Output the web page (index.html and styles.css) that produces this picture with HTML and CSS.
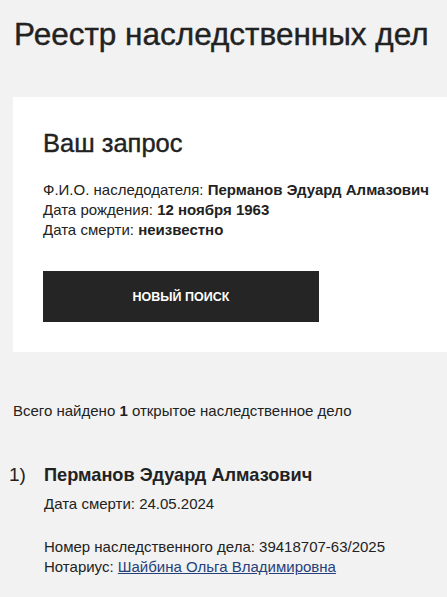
FILE: index.html
```html
<!DOCTYPE html>
<html lang="ru">
<head>
<meta charset="utf-8">
<link rel="stylesheet" href="styles.css">
</head>
<body>
<h1 class="title">Реестр наследственных дел</h1>
<section class="card">
  <h2 class="card-title">Ваш запрос</h2>
  <div class="info">
    <div>Ф.И.О. наследодателя: <b>Перманов Эдуард Алмазович</b></div>
    <div>Дата рождения: <b>12 ноября 1963</b></div>
    <div>Дата смерти: <b>неизвестно</b></div>
  </div>
  <button class="btn">НОВЫЙ ПОИСК</button>
</section>
<p class="total">Всего найдено <b>1</b> открытое наследственное дело</p>
<ol class="results">
  <li class="result">
    <span class="num">1)</span>
    <div class="body">
      <div class="name">Перманов Эдуард Алмазович</div>
      <div class="line first">Дата смерти: 24.05.2024</div>
      <div class="line gap">Номер наследственного дела: 39418707-63/2025</div>
      <div class="line">Нотариус: <a class="link" href="#">Шайбина Ольга Владимировна</a></div>
    </div>
  </li>
</ol>
</body>
</html>
```
FILE: styles.css
```css
html, body {
  margin: 0;
  padding: 0;
}
body {
  background: #f2f2f2;
  font-family: "Liberation Sans", Arial, sans-serif;
  color: #222;
  font-size: 15px;
  line-height: 20px;
}
.title {
  margin: 16px 0 0 14px;
  font-size: 31.5px;
  line-height: 36px;
  font-weight: normal;
  -webkit-text-stroke: 0.4px #222;
  white-space: nowrap;
}
.card {
  margin: 45px 0 0 13px;
  background: #fff;
  padding: 32px 8px 30px 30px;
}
.card-title {
  margin: 0;
  font-size: 25.5px;
  line-height: 28px;
  font-weight: normal;
  -webkit-text-stroke: 0.4px #222;
}
.info {
  margin-top: 23px;
  white-space: nowrap;
}
.btn {
  display: block;
  margin-top: 31px;
  width: 276px;
  height: 51px;
  border: 0;
  background: #252525;
  color: #fff;
  font-family: "Liberation Sans", Arial, sans-serif;
  font-weight: bold;
  font-size: 12.5px;
  padding: 0;
}
.total {
  margin: 49px 0 0 13px;
}
.results {
  list-style: none;
  margin: 43px 0 0 0;
  padding: 0;
}
.result {
  display: flex;
}
.num {
  width: 44px;
  padding-left: 9px;
  box-sizing: border-box;
  font-size: 19px;
  line-height: 22px;
  flex: none;
}
.name {
  font-weight: bold;
  font-size: 18.2px;
  line-height: 22px;
}
.first {
  margin-top: 8px;
}
.gap {
  margin-top: 23px;
}
.link {
  color: #26407a;
  text-decoration: underline;
}
```
